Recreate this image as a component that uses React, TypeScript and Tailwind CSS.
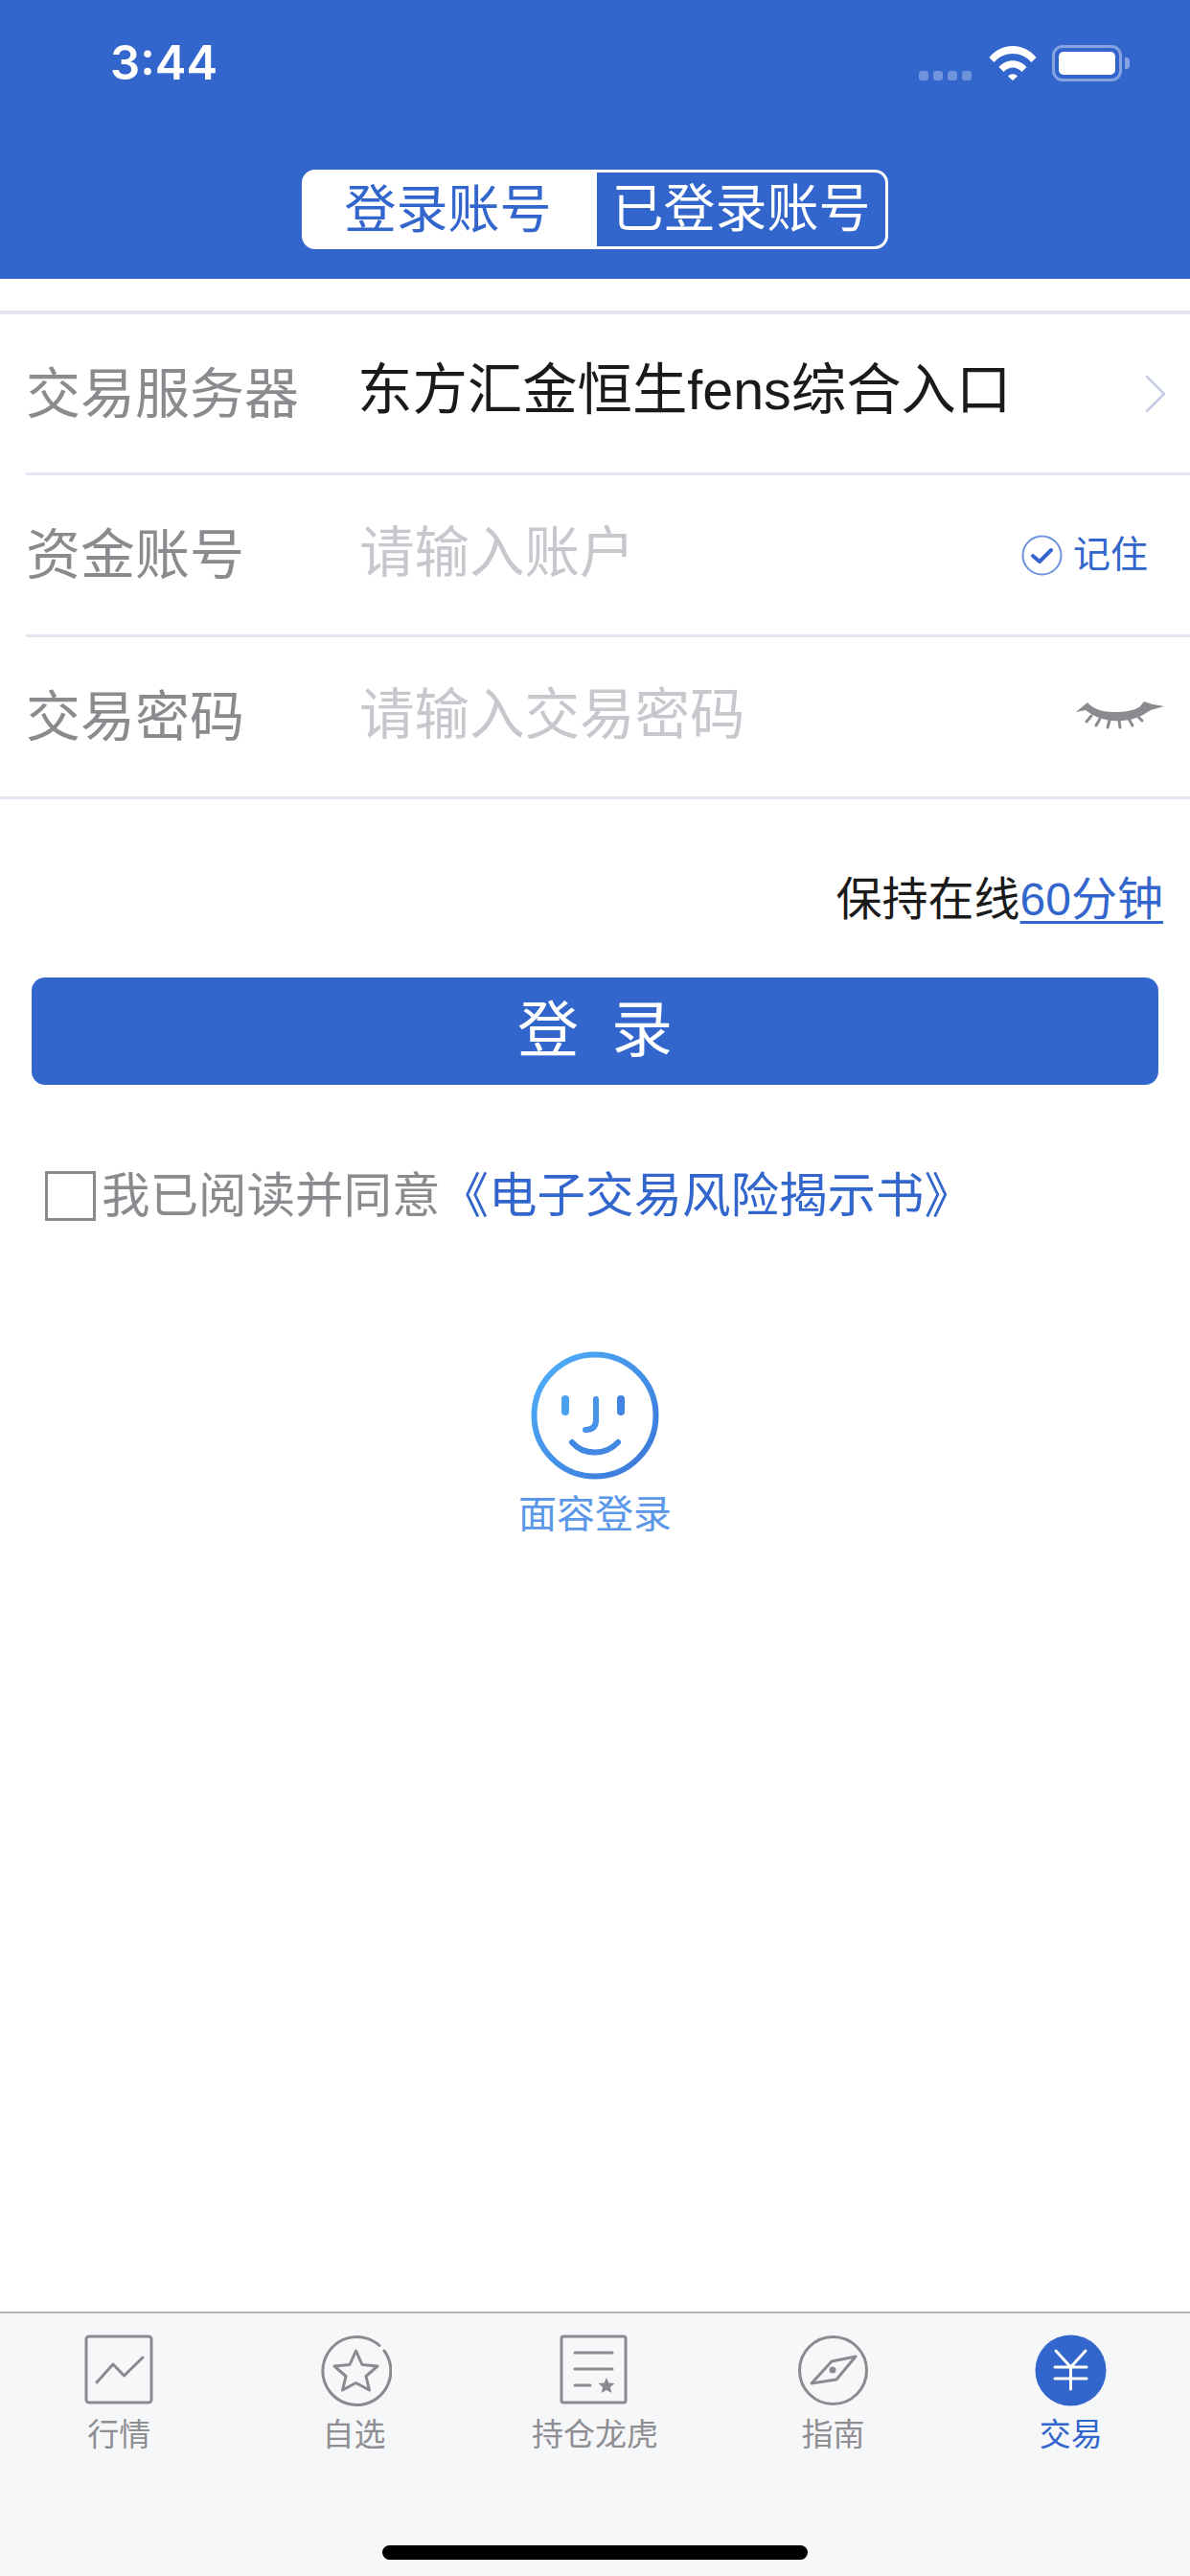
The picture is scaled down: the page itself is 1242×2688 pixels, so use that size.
import React from "react";

const TabIcon = ({ children }: { children: React.ReactNode }) => (
  <svg width="75" height="75" viewBox="0 0 75 75" fill="none" stroke="#8a8a8f" strokeWidth="3" strokeLinecap="round" strokeLinejoin="round">
    {children}
  </svg>
);

const tabs = [
  {
    label: "行情",
    icon: (
      <TabIcon>
        <rect x="3" y="2" width="68" height="69" rx="3" />
        <path d="M14 50L31 31L42.5 43L62 24" />
      </TabIcon>
    ),
  },
  {
    label: "自选",
    icon: (
      <div className="-ml-[3px]">
        <TabIcon>
          <path d="M67 17A35.5 35.5 0 1 1 62 11.5" />
          <path d="M37.5 17L44 31.5L60 33L48 43.5L51.5 58L37.5 50.5L23.5 58L27 43.5L15 33L31 31.5Z" />
        </TabIcon>
      </div>
    ),
    labelClass: "pr-[6px]",
  },
  {
    label: "持仓龙虎",
    icon: (
      <TabIcon>
        <rect x="3" y="2" width="67" height="69" rx="2" />
        <path d="M17 19H56M17 36H56M17 53H33" />
        <path d="M50 45L52.4 50.6L58.5 51.1L53.9 55.1L55.3 61L50 57.9L44.7 61L46.1 55.1L41.5 51.1L47.6 50.6Z" fill="#8a8a8f" stroke="none" />
      </TabIcon>
    ),
  },
  {
    label: "指南",
    icon: (
      <TabIcon>
        <circle cx="37.5" cy="37.5" r="35" />
        <path d="M61 23L36 28L15 51L41 47Z" />
        <circle cx="37" cy="37" r="3.5" fill="#8a8a8f" stroke="none" />
      </TabIcon>
    ),
  },
  {
    label: "交易",
    active: true,
    icon: (
      <svg width="75" height="75" viewBox="0 0 75 75" fill="none" stroke="#fff" strokeWidth="3" strokeLinecap="round" strokeLinejoin="round">
        <circle cx="37.5" cy="37.5" r="37" fill="#3366cc" stroke="none" />
        <path d="M22 17L37.5 34L53 17M21 34H54M21 46H54M37.5 34V57" />
      </svg>
    ),
  },
];

export default function App() {
  return (
    <div className="flex flex-col min-h-[2688px] bg-white font-['Liberation_Sans','Noto_Sans_CJK_SC',sans-serif]">
      {/* Header */}
      <div className="h-[291px] bg-[#3366cc]">
        <div className="h-[177px] flex items-start justify-between pt-[47px] pl-[115px] pr-[63px]">
          <span className="font-['Inter'] font-semibold text-[49px] leading-[38px] text-white">3:44</span>
          <div className="flex items-end">
            <div className="flex gap-[5px] mb-[1px] mr-[18px]">
              <span className="w-[10px] h-[10px] rounded-[3px] bg-white/30"></span>
              <span className="w-[10px] h-[10px] rounded-[3px] bg-white/30"></span>
              <span className="w-[10px] h-[10px] rounded-[3px] bg-white/30"></span>
              <span className="w-[10px] h-[10px] rounded-[3px] bg-white/30"></span>
            </div>
            <svg width="50" height="37" viewBox="0 0 50 37" fill="#fff" className="mb-[1px] mr-[16px]">
              <path d="M0.5 13C13 -3 37 -3 49.5 13L44.5 18C34 6 16 6 5.5 18Z" />
              <path d="M10.5 23C18 14 32 14 39.5 23L34.5 28C29 22 21 22 15.5 28Z" />
              <path d="M20 32.5C23 29.5 27 29.5 30 32.5L25 37Z" />
            </svg>
            <div className="flex items-center">
              <div className="w-[73px] h-[38px] rounded-[11px] border-[3px] border-white/40 p-[4px]">
                <div className="w-full h-full rounded-[5px] bg-white"></div>
              </div>
              <span className="w-[5px] h-[12px] ml-[3px] rounded-r-[4px] bg-white/40"></span>
            </div>
          </div>
        </div>
        <div className="flex justify-center">
          <div className="flex w-[612px] h-[83px] bg-white border-[3px] border-white rounded-[14px] text-[54px] pt-px">
            <div className="flex-1 flex items-center justify-center pr-[6px] text-[#3366cc]">登录账号</div>
            <div className="w-[301px] -mt-px flex items-center justify-center bg-[#3366cc] text-white rounded-r-[11px]">已登录账号</div>
          </div>
        </div>
      </div>

      {/* Form */}
      <div className="flex-1 flex flex-col">
        <div className="mt-[33px] border-t-[4px] border-[#e3e6f0] pl-[27px]">
          <div className="h-[168px] flex items-center border-b-[3px] border-[#e3e6f0] pr-[25px]">
            <span className="w-[346px] pt-[2px] text-[57px] text-[#8a8a8f]">交易服务器</span>
            <span className="flex-1 pb-[6px] text-[57.4px] text-[#1a1a1a]">东方汇金恒生fens综合入口</span>
            <svg width="22" height="40" viewBox="0 0 22 40" fill="none" stroke="#c5cde0" strokeWidth="2.5" strokeLinecap="round" strokeLinejoin="round">
              <path d="M2 2L20 20L2 38" />
            </svg>
          </div>
          <div className="h-[169px] flex items-center border-b-[3px] border-[#e3e6f0] pr-[44px]">
            <span className="w-[348px] pt-[2px] text-[57px] text-[#8a8a8f]">资金账号</span>
            <span className="flex-1 pb-[3px] text-[57.5px] text-[#c7c7cd]">请输入账户</span>
            <svg width="43" height="43" viewBox="0 0 43 43" fill="none" strokeLinecap="round" strokeLinejoin="round" className="mr-[11px]">
              <circle cx="21.5" cy="21.5" r="20" stroke="#6d93de" strokeWidth="2" />
              <path d="M12 22L19 28L31 16" stroke="#3366cc" strokeWidth="4" />
            </svg>
            <span className="text-[39px] text-[#3366cc]">记住</span>
          </div>
        </div>
        <div className="h-[169px] flex items-center border-b-[3px] border-[#e3e6f0] pl-[27px] pr-[27px]">
          <span className="w-[348px] pt-[2px] text-[57px] text-[#8a8a8f]">交易密码</span>
          <span className="flex-1 pb-[3px] text-[57.5px] text-[#c7c7cd]">请输入交易密码</span>
          <svg width="92" height="30" viewBox="0 0 92 30" stroke="#8a8a8f" strokeWidth="3" fill="#8a8a8f" strokeLinecap="round" className="mb-[4px]">
            <path d="M0 12L12 2C18 9 28 12 40 12C52 12 62 10 67 6L71 1L80 4L92 6L78 10L70 15C60 20 50 22 38 21C26 20 16 15 10 10Z" stroke="none" />
            <path d="M16 16L11 22M25 19L21 26M35 21L33 28M45 21L46 28M55 19L59 26M64 16L69 21" fill="none" />
          </svg>
        </div>

        <div className="flex justify-end pr-[28px] pt-[70px] text-[48px] leading-[70px] text-[#1a1a1a]">
          保持在线<span className="text-[#3366cc] underline underline-offset-[6px] decoration-[3px]">60分钟</span>
        </div>

        <button className="mt-[46px] mx-[33px] h-[112px] rounded-[14px] bg-[#3366cc] text-white text-[64px] tracking-[8px] pl-[8px] pb-[2px]">
          登 录
        </button>

        <div className="flex items-center mt-[90px] ml-[47px] text-[50.5px] leading-[52px]">
          <span className="w-[53px] h-[52px] border-[3px] border-[#8a8a8f] mr-[6px]"></span>
          <span className="text-[#8a8a8f]">我已阅读并同意</span>
          <span className="text-[#3366cc]">《电子交易风险揭示书》</span>
        </div>

        <div className="flex flex-col items-center mt-[136px]">
          <svg width="134" height="134" viewBox="0 0 134 134" fill="none" strokeWidth="6" strokeLinecap="round">
            <defs>
              <linearGradient id="faceGrad" x1="0" y1="0" x2="1" y2="1">
                <stop offset="0" stopColor="#4fb0fb" />
                <stop offset="1" stopColor="#3a74d6" />
              </linearGradient>
            </defs>
            <circle cx="67" cy="67" r="63.5" stroke="url(#faceGrad)" />
            <path d="M36 50V63" stroke="#4a9fef" strokeWidth="8" />
            <path d="M94 50V63" stroke="#4285e2" strokeWidth="8" />
            <path d="M68 50V72C68 79 64 82 57 82" stroke="#4693e8" />
            <path d="M43 95C55 109 78 109 91 95" stroke="#4288e3" />
          </svg>
          <span className="mt-[12px] text-[40px] leading-[48px] text-[#5a97e8]">面容登录</span>
        </div>
      </div>

      {/* Tab bar */}
      <div className="h-[276px] bg-[#f6f7f9] border-t-2 border-[#b4b4b6]">
        <div className="grid grid-cols-5 pt-[22px]">
          {tabs.map((tab) => (
            <div key={tab.label} className="flex flex-col items-center">
              {tab.icon}
              <span className={`mt-[7px] text-[33px] leading-[46px] ${tab.active ? "text-[#3366cc]" : "text-[#8e8e93]"} ${tab.labelClass ?? ""}`}>
                {tab.label}
              </span>
            </div>
          ))}
        </div>
        <div className="mt-[92px] mx-auto w-[444px] h-[15px] rounded-full bg-black"></div>
      </div>
    </div>
  );
}
